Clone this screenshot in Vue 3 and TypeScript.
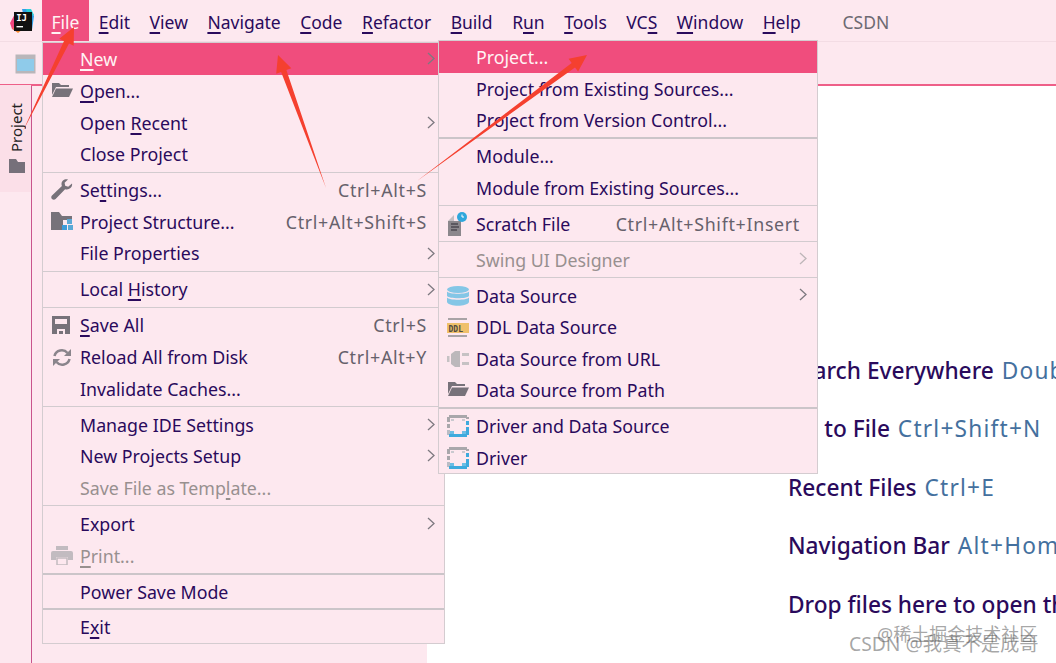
<script setup lang="ts">
interface Row {
  label?: string
  u?: number
  sc?: string
  arrow?: boolean
  disabled?: boolean
  active?: boolean
  icon?: string
  sep?: boolean
  thick?: boolean
}

const menuBar: { label: string; u: number }[] = [
  { label: 'File', u: 0 },
  { label: 'Edit', u: 0 },
  { label: 'View', u: 0 },
  { label: 'Navigate', u: 0 },
  { label: 'Code', u: 0 },
  { label: 'Refactor', u: 0 },
  { label: 'Build', u: 0 },
  { label: 'Run', u: 1 },
  { label: 'Tools', u: 0 },
  { label: 'VCS', u: 2 },
  { label: 'Window', u: 0 },
  { label: 'Help', u: 0 },
]

const fileMenu: Row[] = [
  { label: 'New', u: 0, arrow: true, active: true },
  { label: 'Open...', u: 0, icon: 'open' },
  { label: 'Open Recent', u: 5, arrow: true },
  { label: 'Close Project' },
  { sep: true },
  { label: 'Settings...', u: 2, sc: 'Ctrl+Alt+S', icon: 'wrench' },
  { label: 'Project Structure...', sc: 'Ctrl+Alt+Shift+S', icon: 'structure' },
  { label: 'File Properties', arrow: true },
  { sep: true },
  { label: 'Local History', u: 6, arrow: true },
  { sep: true },
  { label: 'Save All', u: 0, sc: 'Ctrl+S', icon: 'save' },
  { label: 'Reload All from Disk', sc: 'Ctrl+Alt+Y', icon: 'reload' },
  { label: 'Invalidate Caches...' },
  { sep: true },
  { label: 'Manage IDE Settings', arrow: true },
  { label: 'New Projects Setup', arrow: true },
  { label: 'Save File as Template...', u: 17, disabled: true },
  { sep: true },
  { label: 'Export', arrow: true },
  { label: 'Print...', u: 0, disabled: true, icon: 'print' },
  { sep: true, thick: true },
  { label: 'Power Save Mode' },
  { sep: true, thick: true },
  { label: 'Exit', u: 1 },
]

const newMenu: Row[] = [
  { label: 'Project...', active: true },
  { label: 'Project from Existing Sources...' },
  { label: 'Project from Version Control...' },
  { sep: true, thick: true },
  { label: 'Module...' },
  { label: 'Module from Existing Sources...' },
  { sep: true },
  { label: 'Scratch File', sc: 'Ctrl+Alt+Shift+Insert', icon: 'scratch' },
  { sep: true },
  { label: 'Swing UI Designer', arrow: true, disabled: true },
  { sep: true },
  { label: 'Data Source', arrow: true, icon: 'db' },
  { label: 'DDL Data Source', icon: 'ddl' },
  { label: 'Data Source from URL', icon: 'plug' },
  { label: 'Data Source from Path', icon: 'open' },
  { sep: true, thick: true },
  { label: 'Driver and Data Source', icon: 'driver' },
  { label: 'Driver', icon: 'driver' },
]

const hints: { label: string; key: string }[] = [
  { label: 'Search Everywhere', key: 'Double Shift' },
  { label: 'Go to File', key: 'Ctrl+Shift+N' },
  { label: 'Recent Files', key: 'Ctrl+E' },
  { label: 'Navigation Bar', key: 'Alt+Home' },
  { label: 'Drop files here to open them', key: '' },
]

// Builds a tapered annotation arrow, from a thin tail to a head with two wings.
function arrowPoints(x0: number, y0: number, x1: number, y1: number, head = 17, wing = 8, neck = 2.8): string {
  const len = Math.hypot(x1 - x0, y1 - y0)
  const ux = (x1 - x0) / len
  const uy = (y1 - y0) / len
  const nx = -uy
  const ny = ux
  const bx = x1 - ux * head
  const by = y1 - uy * head
  const pts: [number, number][] = [
    [x0, y0],
    [bx + nx * neck, by + ny * neck],
    [bx + nx * wing, by + ny * wing],
    [x1, y1],
    [bx - nx * wing, by - ny * wing],
    [bx - nx * neck, by - ny * neck],
  ]
  return pts.map((p) => p.map((v) => v.toFixed(1)).join(',')).join(' ')
}

const arrows: string[] = [
  arrowPoints(23, 131, 74, 27),
  arrowPoints(326, 188, 278, 55),
  arrowPoints(417, 181, 587, 55),
]
</script>

<template>
  <div class="page">
    <header class="menubar">
      <svg class="logo" width="24" height="24" viewBox="0 0 24 24">
        <path d="M0 14 6 3h6v14l-5 6-5-3z" fill="#f0457f" />
        <path d="M12 0h8l4 7-2 14-6-4z" fill="#2f9fe8" />
        <path d="M3 20l4-8 6 8-5 4z" fill="#f58a2c" />
        <path d="M16 0h5l3 6-6 2z" fill="#2ad0d8" />
        <rect x="4" y="3" width="18" height="19" fill="#111" />
        <text x="6.200" y="12" class="logo-text">IJ</text>
        <rect x="6.500" y="17" width="6.500" height="1.400" fill="#fff" />
      </svg>
      <nav class="menu-items">
        <span v-for="(m, i) in menuBar" :key="m.label" class="menu-item" :class="{ open: i === 0 }">{{ m.label.slice(0, m.u) }}<u>{{ m.label[m.u] }}</u>{{ m.label.slice(m.u + 1) }}</span>
      </nav>
      <span class="brand">CSDN</span>
    </header>

    <div class="toolbar">
      <svg width="21" height="20" viewBox="0 0 21 20">
        <rect x="0.500" y="0.500" width="20" height="19" fill="#b9b6ba" />
        <rect x="2" y="5" width="17" height="12" fill="#8fcbea" />
      </svg>
    </div>

    <div class="body">
      <aside class="rail">
        <div class="tab">
          <span class="tab-label">Project</span>
          <svg width="16" height="14" viewBox="0 0 16 14">
            <path d="M0 0h7l2 3h7v11H0z" fill="#76707a" />
          </svg>
        </div>
      </aside>
      <div class="panel"></div>
      <main class="hints">
        <p v-for="h in hints" :key="h.label" class="hint">{{ h.label }} <span class="hint-key">{{ h.key }}</span></p>
      </main>
    </div>

    <template v-for="(menu, mi) in [fileMenu, newMenu]" :key="mi">
      <div class="popup" :class="mi === 0 ? 'popup-file' : 'popup-new'">
        <template v-for="(r, ri) in menu" :key="ri">
          <div v-if="r.sep" class="sep" :class="{ thick: r.thick }"></div>
          <div v-else class="row" :class="{ active: r.active, disabled: r.disabled }">
            <span class="ico">
              <svg v-if="r.icon === 'open'" width="22" height="18" viewBox="0 0 22 18">
                <path d="M1 1h7l2 2h8v2H5L1 13z" fill="#77727a" />
                <path d="M5 6.500h17L18 15H1z" fill="#77727a" />
              </svg>
              <svg v-else-if="r.icon === 'wrench'" width="22" height="22" viewBox="0 0 22 22">
                <path d="M21 4.500l-3.800 3.300-3-1-.6-3L17 .6c-3-1-6.500 1-6.500 4.400 0 .8.100 1.500.4 2.100L1 16.500c-1 1-1 2.500 0 3.500s2.600 1 3.600 0l9.500-9.800c3.500 1.300 7.800-1.500 6.900-5.700z" fill="#77727a" />
              </svg>
              <svg v-else-if="r.icon === 'structure'" width="22" height="19" viewBox="0 0 22 19">
                <path d="M0 0h8l3 4h10v4h-9v10H0z" fill="#77727a" />
                <rect x="16" y="7" width="5" height="5" fill="#5aa9d6" />
                <rect x="11" y="13" width="5" height="5" fill="#3e9bd8" />
                <rect x="17" y="13" width="5" height="5" fill="#5aa9d6" />
              </svg>
              <svg v-else-if="r.icon === 'save'" width="19" height="19" viewBox="0 0 19 19">
                <path d="M0 0h18v18H0z" fill="#77727a" />
                <rect x="3" y="3" width="12" height="5" fill="#fde8ef" />
                <rect x="5" y="13" width="8" height="5" fill="#fde8ef" />
                <rect x="7" y="15" width="4" height="3" fill="#77727a" />
              </svg>
              <svg v-else-if="r.icon === 'reload'" width="20" height="19" viewBox="0 0 20 19" fill="none">
                <path d="M2.500 8a7.500 7.500 0 0 1 13-3" stroke="#8a858c" stroke-width="2.600" />
                <path d="M17.500 11a7.500 7.500 0 0 1-13 3" stroke="#8a858c" stroke-width="2.600" />
                <path d="M12 8h7V1z" fill="#8a858c" />
                <path d="M8 11H1v7z" fill="#8a858c" />
              </svg>
              <svg v-else-if="r.icon === 'print'" width="22" height="19" viewBox="0 0 22 19">
                <rect x="5" y="0" width="12" height="4" fill="#c2bbc0" />
                <path d="M2 5h18q2 0 2 2v7h-5v-3H5v3H0V7q0-2 2-2z" fill="#c2bbc0" />
                <path d="M6 12h10v7H6z" fill="none" stroke="#c2bbc0" stroke-width="1.500" />
              </svg>
              <svg v-else-if="r.icon === 'scratch'" width="24" height="24" viewBox="0 0 24 24">
                <path d="M2 9l6-6v6z" fill="#c4bec2" />
                <path d="M2 9h13v15H2z" fill="#8b878c" />
                <path d="M5 12h7M5 15h8M5 18h6" stroke="#4d4a50" stroke-width="1.300" />
                <circle cx="16" cy="5" r="5" fill="#2fa7dc" />
                <path d="M16 2.500V5h2" stroke="#fff" stroke-width="1" fill="none" />
              </svg>
              <svg v-else-if="r.icon === 'db'" width="22" height="20" viewBox="0 0 22 20">
                <ellipse cx="11" cy="3.500" rx="11" ry="3.500" fill="#84c6e6" />
                <path d="M0 5.500c2 3 20 3 22 0V10c-2 3-20 3-22 0z" fill="#84c6e6" />
                <path d="M0 11.500c2 3 20 3 22 0V16c-2 5-20 5-22 0z" fill="#84c6e6" />
              </svg>
              <svg v-else-if="r.icon === 'ddl'" width="22" height="19" viewBox="0 0 22 19">
                <rect x="1" y="0" width="19" height="2" fill="#a9a3a6" />
                <rect x="0" y="5" width="22" height="10" fill="#efc06a" />
                <rect x="1" y="17" width="19" height="2" fill="#a9a3a6" />
                <text x="1.500" y="13.500" class="ddl-text">DDL</text>
              </svg>
              <svg v-else-if="r.icon === 'plug'" width="22" height="16" viewBox="0 0 22 16">
                <rect x="0" y="5" width="2.500" height="6" fill="#c6c2c4" />
                <path d="M4 3l4-3h5v16H8l-4-3z" fill="#bcb8bb" />
                <rect x="15" y="2" width="7" height="3" fill="#c6c2c4" />
                <rect x="15" y="11" width="7" height="3" fill="#c6c2c4" />
              </svg>
              <svg v-else-if="r.icon === 'driver'" width="22" height="22" viewBox="0 0 22 22" fill="none">
                <path d="M2 0h18v3H2zM0 2h3v5H0zM0 9h3v4H0zM19 2h3v2h-3z" fill="#a9a7ab" />
                <path d="M0 15h3v5H0z" fill="#b9bcc4" />
                <path d="M19 6h3v4h-3zM19 12h3v8h-3zM2 19h18v3H2z" fill="#3eaadd" />
                <path d="M3 16h4v3H3zM15 16h4v3h-4z" fill="#6cbde4" />
                <path d="M4 4h3v2H4zM15 4h3v2h-3z" fill="#c9c9cf" />
              </svg>
            </span>
            <span class="label"><template v-if="r.u !== undefined">{{ r.label!.slice(0, r.u) }}<u>{{ r.label![r.u] }}</u>{{ r.label!.slice(r.u + 1) }}</template><template v-else>{{ r.label }}</template></span>
            <span v-if="r.sc" class="shortcut">{{ r.sc }}</span>
            <svg v-if="r.arrow" class="chev" width="8" height="13" viewBox="0 0 8 13" fill="none">
              <path d="M1 1l6 5.500L1 12" stroke="currentColor" stroke-width="1.300" />
            </svg>
          </div>
        </template>
      </div>
    </template>

    <svg class="annotations" width="1056" height="663" viewBox="0 0 1056 663">
      <polygon v-for="(p, i) in arrows" :key="i" :points="p" fill="#f5402f" />
    </svg>

    <span class="wm wm-a">@稀土掘金技术社区</span>
    <span class="wm wm-b">CSDN @我真不是成哥</span>
  </div>
</template>

<style>
html, body { margin: 0; padding: 0; }
</style>

<style scoped>
.page {
  position: relative;
  width: 1056px;
  height: 663px;
  overflow: hidden;
  display: flex;
  flex-direction: column;
  background: #fde8ef;
  color: #2a0a5c;
  font-family: "Noto Sans", "Noto Sans CJK SC", sans-serif;
  font-size: 17.800px;
}
u {
  text-decoration-thickness: 2px;
  text-underline-offset: 3px;
  text-decoration-skip-ink: none;
}
.menubar {
  height: 42px;
  flex: none;
  display: flex;
  align-items: center;
  box-sizing: border-box;
  border-bottom: 1px solid #f3dce4;
}
.logo { margin-left: 10px; margin-right: 8px; flex: none; }
.logo-text {
  font-family: "DejaVu Sans Mono", monospace;
  font-size: 9px;
  font-weight: 700;
  fill: #fff;
}
.menu-items { display: flex; height: 100%; }
.menu-item {
  padding: 0 9.750px;
  line-height: 45px;
  font-size: 17.500px;
  white-space: nowrap;
}
.menu-item.open { background: #ef4f7f; color: #fff3f3; padding: 0 9.500px; }
.brand { margin-left: 32px; color: #6d6a72; font-size: 17.500px; padding-top: 3px; }
.toolbar {
  height: 44px;
  flex: none;
  box-sizing: border-box;
  border-bottom: 2px solid #ee5f88;
  padding: 12px 0 0 15px;
}
.toolbar svg { display: block; }
.body { flex: 1; display: flex; min-height: 0; }
.rail {
  width: 32px;
  flex: none;
  box-sizing: border-box;
  border-right: 1px solid #c9548c;
}
.tab {
  height: 107px;
  background: #fbdfe8;
  display: flex;
  flex-direction: column;
  align-items: center;
  padding: 18px 0 0 2px;
  box-sizing: border-box;
  gap: 7px;
  margin-top: -1px;
}
.tab-label {
  writing-mode: vertical-rl;
  transform: rotate(180deg);
  font-size: 15px;
  color: #222;
  line-height: 1;
}
.panel { width: 395px; flex: none; }
.hints {
  flex: 1;
  min-width: 0;
  background: #fff;
  padding: 269.500px 0 0 361px;
  display: flex;
  flex-direction: column;
  gap: 28px;
  overflow: hidden;
  font-size: 22.700px;
}
.hint {
  margin: 0;
  white-space: nowrap;
  line-height: 30.600px;
  font-weight: 500;
}
.hint-key { color: #44709e; font-weight: 400; letter-spacing: 1.200px; margin-left: 2px; }
.popup {
  position: absolute;
  background: #fde8ef;
  border: 1px solid #d4ccd0;
  box-sizing: border-box;
  display: flex;
  flex-direction: column;
  padding-top: 0.400px;
}
.popup-file { left: 42px; top: 42px; width: 403px; height: 602px; }
.popup-new { left: 438px; top: 40px; width: 380px; height: 434px; }
.row {
  height: 31.670px;
  flex: none;
  display: flex;
  align-items: center;
  position: relative;
  white-space: nowrap;
}
.popup-new .row { height: 31.600px; }
.row.active { background: #f04d7d; color: #fff4f4; }
.row.disabled { color: #98908f; }
.ico {
  width: 37px;
  flex: none;
  display: flex;
  justify-content: center;
  box-sizing: border-box;
}
.ico svg { display: block; }
.ddl-text {
  font-family: "DejaVu Sans Mono", monospace;
  font-size: 8px;
  font-weight: 700;
  fill: #4f4a40;
}
.label { flex: 1; }
.shortcut { color: #66616b; margin-right: 17px; letter-spacing: 0.700px; }
.chev {
  position: absolute;
  right: 9px;
  top: 9px;
  color: #7d7980;
}
.popup-new .chev { right: 10px; top: 8px; }
.row.disabled .chev { color: #bdb5b8; }
.sep {
  height: 4.300px;
  flex: none;
  display: flex;
  align-items: center;
  position: relative;
}
.sep::after {
  content: "";
  display: block;
  width: 100%;
  height: 1px;
  background: #d2cbcf;
}
.sep.thick::after { height: 2px; background: #cbc5c9; }
.annotations { position: absolute; left: 0; top: 0; pointer-events: none; }
.wm {
  position: absolute;
  white-space: nowrap;
  color: rgba(90, 90, 90, 0.55);
  line-height: 1;
}
.wm-a { left: 877px; top: 625px; font-size: 18px; }
.wm-b { left: 849px; top: 634px; font-size: 19.300px; }
</style>
